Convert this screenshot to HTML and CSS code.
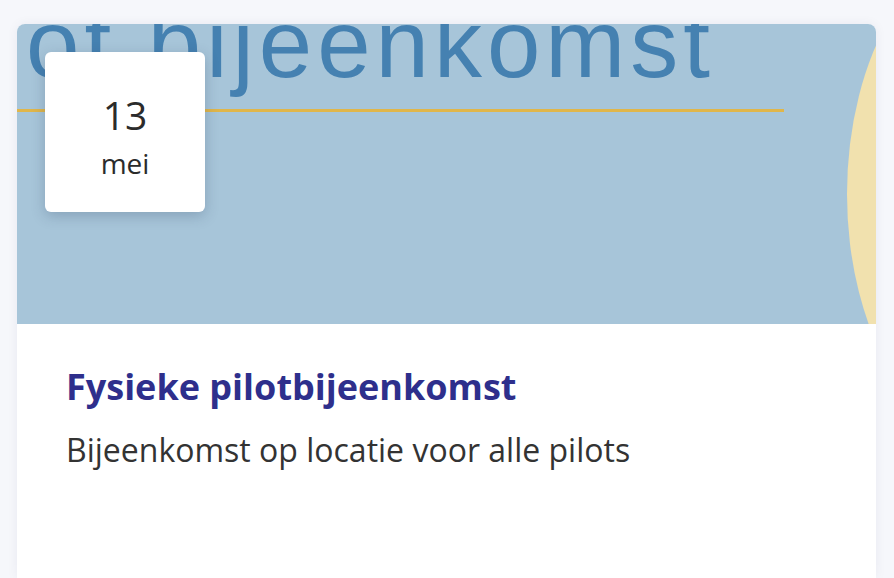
FILE: index.html
```html
<!DOCTYPE html>
<html lang="nl">
<head>
    <meta charset="UTF-8">
    <meta name="viewport" content="width=device-width, initial-scale=1.0">
    <title>Fysieke pilotbijeenkomst</title>
    <link rel="stylesheet" href="styles.css">
</head>
<body>
    <div class="event-card">
        <div class="event-image">
            <svg class="banner" viewBox="0 0 859 300" preserveAspectRatio="none">
                <rect width="859" height="300" fill="#a7c5d9"/>
                <text x="698" y="53" text-anchor="end" class="banner-text">pilot bijeenkomst</text>
                <rect x="0" y="85" width="767" height="3" fill="#e0b64a"/>
                <ellipse cx="985" cy="170" rx="155" ry="255" fill="#f1e1ae"/>
            </svg>
            <div class="date-box">
                <div class="date-day">13</div>
                <div class="date-month">mei</div>
            </div>
        </div>
        <div class="event-body">
            <h2 class="event-title">Fysieke pilotbijeenkomst</h2>
            <p class="event-desc">Bijeenkomst op locatie voor alle pilots</p>
        </div>
    </div>
</body>
</html>
```

FILE: styles.css
```css
body {
    background-color: #f6f7fb;
    font-family: "Open Sans", sans-serif;
    margin: 0;
    padding: 24px 18px 0 17px;
    height: 578px;
    box-sizing: border-box;
    overflow: hidden;
}
.event-card {
    background-color: #ffffff;
    border-radius: 8px 8px 0 0;
    box-shadow: 0 0 12px rgba(30, 40, 90, 0.06);
    height: 100%;
    overflow: hidden;
}
.event-image {
    position: relative;
    height: 300px;
}
.banner {
    display: block;
    width: 100%;
    height: 300px;
}
.banner-text {
    font-family: "Liberation Sans", Arial, sans-serif;
    font-size: 96px;
    letter-spacing: 5px;
    fill: #4581b1;
}
.date-box {
    position: absolute;
    left: 28px;
    top: 28px;
    width: 160px;
    height: 160px;
    padding-top: 10px;
    box-sizing: border-box;
    background-color: #ffffff;
    border-radius: 6px;
    box-shadow: 0 4px 14px rgba(40, 60, 90, 0.25);
    display: flex;
    flex-direction: column;
    align-items: center;
    justify-content: center;
    color: #2b2b2b;
}
.date-day {
    font-size: 39px;
    font-weight: 500;
    line-height: 44px;
}
.date-month {
    font-size: 28px;
    line-height: 36px;
    margin-top: 8px;
}
.event-body {
    padding: 41px 49px;
}
.event-title {
    margin: 0;
    color: #2e2f8c;
    font-size: 36px;
    font-weight: 700;
    line-height: 44px;
}
.event-desc {
    margin: 21px 0 0;
    color: #333333;
    font-size: 32px;
    line-height: 40px;
}
```
